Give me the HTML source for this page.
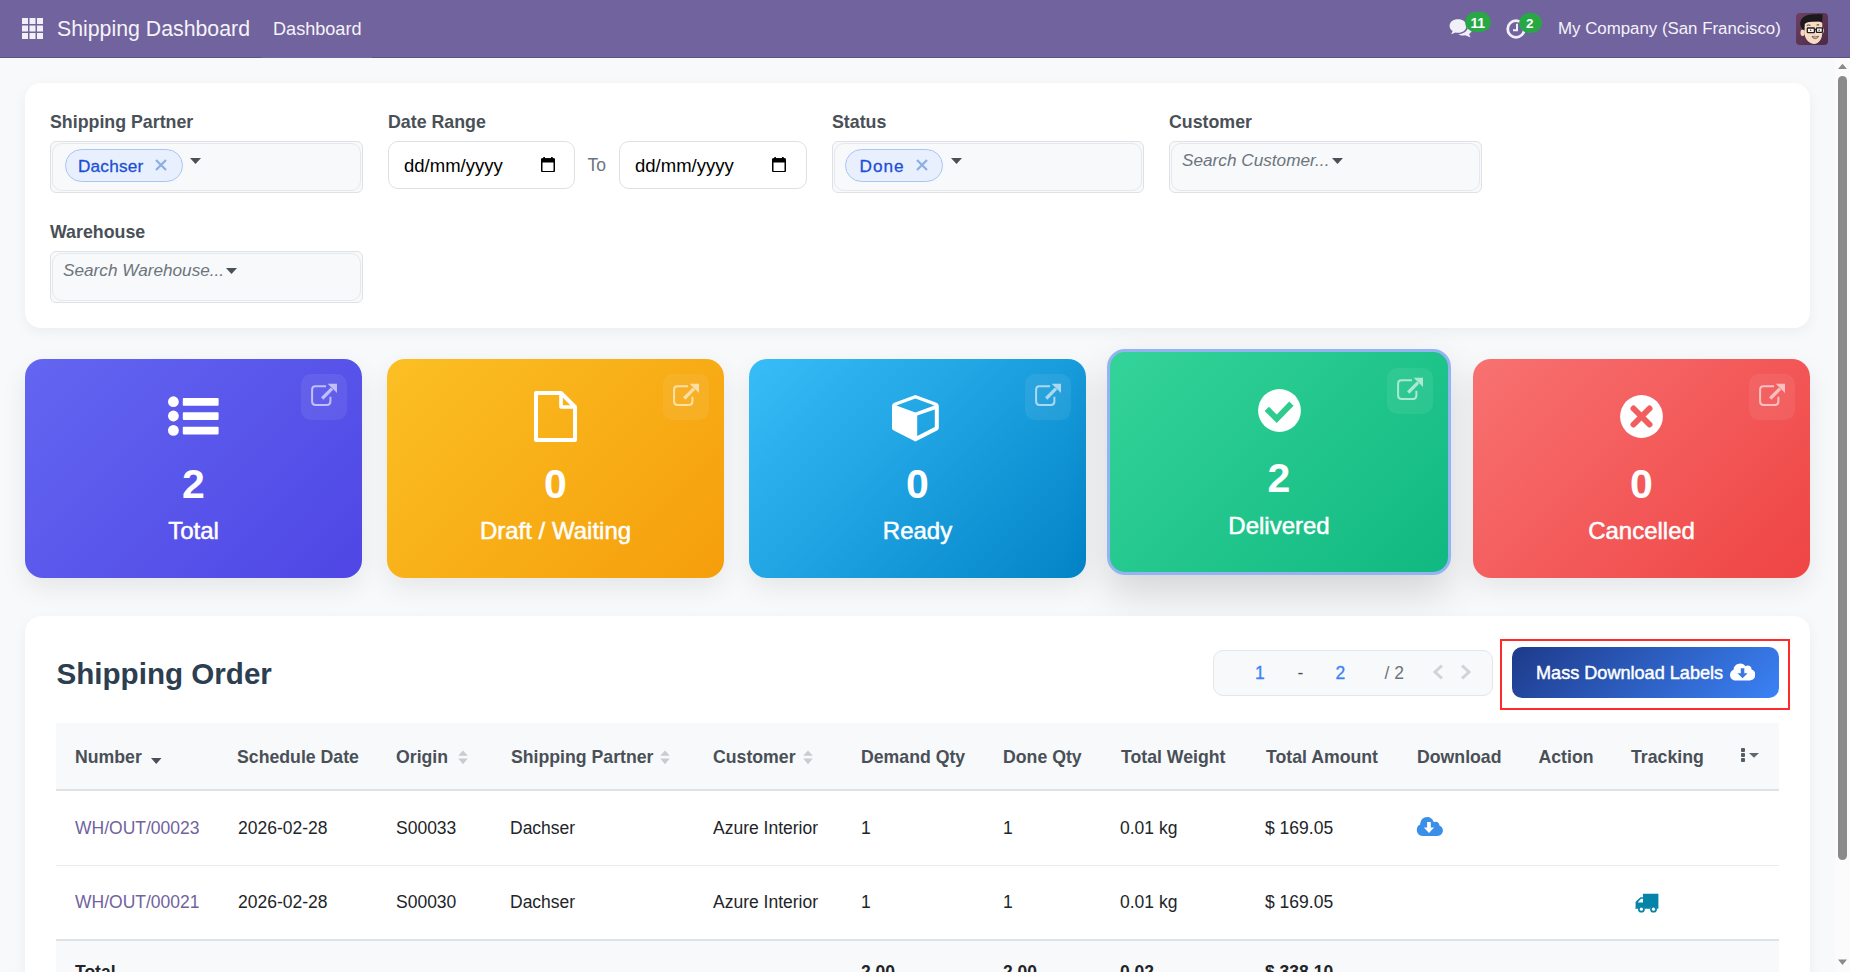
<!DOCTYPE html>
<html><head><meta charset="utf-8">
<style>
*{box-sizing:border-box;margin:0;padding:0}
html,body{width:1850px;height:972px;overflow:hidden}
body{background:#f8f9fa;font-family:"Liberation Sans",sans-serif;position:relative;color:#212529}
.a{position:absolute}
.t{position:absolute;line-height:1;white-space:nowrap}
/* navbar */
#nav{left:0;top:0;width:1850px;height:58px;background:#71639e;border-bottom:1px solid #5e5189}
#nav .t{color:#f5f3f9}
/* cards */
.card{position:absolute;background:#fff;border-radius:16px;box-shadow:0 4px 14px rgba(0,0,0,.05)}
.lbl{font-weight:700;font-size:17.8px;color:#495057}
.sel{position:absolute;background:#f8f9fa;border:1px solid #dee2e6;border-radius:6px}
.sel:after{content:"";position:absolute;left:1px;top:1px;right:1px;bottom:1px;border:1px solid #e6e8eb;border-radius:10px}
.chip{position:absolute;background:#e8f0fd;border:1px solid #a9c5f3;border-radius:17px}
.chip .t{color:#1d4ed8;font-size:17.2px;letter-spacing:0.2px;-webkit-text-stroke:0.3px #1d4ed8}
.ph{color:#6c757d;font-style:italic;font-size:17.2px}
.date{position:absolute;background:#fff;border:1px solid #dde1e6;border-radius:10px}
.stat{position:absolute;border-radius:18px;color:#fff;box-shadow:0 10px 26px rgba(0,0,0,.08)}
.stat .num{position:absolute;left:0;right:0;text-align:center;font-weight:700;font-size:41px;line-height:1}
.stat .cap{position:absolute;left:0;right:0;text-align:center;font-size:24px;line-height:1;-webkit-text-stroke:0.5px #fff}
.ext{position:absolute;width:46px;height:46px;border-radius:10px;background:rgba(255,255,255,.07)}
.th{font-weight:700;font-size:17.7px;color:#495057}
.td{font-size:17.5px;color:#212529}
</style></head><body>

<div id="nav" class="a">
  <svg class="a" style="left:22px;top:18px" width="21" height="21" viewBox="0 0 21 21" fill="#f1eff7">
    <rect x="0" y="0" width="6" height="6"/><rect x="7.5" y="0" width="6" height="6"/><rect x="15" y="0" width="6" height="6"/>
    <rect x="0" y="7.5" width="6" height="6"/><rect x="7.5" y="7.5" width="6" height="6"/><rect x="15" y="7.5" width="6" height="6"/>
    <rect x="0" y="15" width="6" height="6"/><rect x="7.5" y="15" width="6" height="6"/><rect x="15" y="15" width="6" height="6"/>
  </svg>
  <div class="t" style="left:57px;top:19px;font-size:21.3px">Shipping Dashboard</div>
  <div class="t" style="left:273px;top:19.8px;font-size:18.1px">Dashboard</div>
  <div class="t" style="left:1558px;top:21px;font-size:16.85px">My Company (San Francisco)</div>
</div>

<div class="a" style="left:262px;top:57px;width:110px;height:1px;background:#71639e"></div>
<!-- filter card -->
<div class="card" style="left:25px;top:83px;width:1785px;height:245px"></div>
<div class="t lbl" style="left:50px;top:114px">Shipping Partner</div>
<div class="t lbl" style="left:388px;top:114px">Date Range</div>
<div class="t lbl" style="left:832px;top:114px">Status</div>
<div class="t lbl" style="left:1169px;top:114px">Customer</div>
<div class="t lbl" style="left:50px;top:224px">Warehouse</div>

<div class="sel" style="left:50px;top:141px;width:313px;height:52px"></div>
<div class="chip" style="left:65px;top:149px;width:118px;height:33px"><div class="t" style="left:12px;top:8px">Dachser</div></div>

<div class="date" style="left:388px;top:141px;width:187px;height:48px"><div class="t" style="left:15px;top:14.5px;font-size:18.5px;color:#000">dd/mm/yyyy</div></div>
<div class="t" style="left:587.5px;top:156.5px;font-size:17.5px;color:#6c757d">To</div>
<div class="date" style="left:619px;top:141px;width:188px;height:48px"><div class="t" style="left:15px;top:14.5px;font-size:18.5px;color:#000">dd/mm/yyyy</div></div>

<div class="sel" style="left:832px;top:141px;width:312px;height:52px"></div>
<div class="chip" style="left:845px;top:149px;width:98px;height:33px"><div class="t" style="left:13.5px;top:8px;letter-spacing:1px">Done</div></div>

<div class="sel" style="left:1169px;top:141px;width:313px;height:52px"></div>
<div class="t ph" style="left:1182px;top:152px">Search Customer...</div>

<div class="sel" style="left:50px;top:251px;width:313px;height:52px"></div>
<div class="t ph" style="left:63px;top:262px">Search Warehouse...</div>

<!-- stat cards -->
<div class="stat" style="left:25px;top:359px;width:337px;height:219px;background:linear-gradient(135deg,#6366f1,#4f46e5)">
  <div class="ext" style="left:276px;top:15px"><svg width="46" height="46" viewBox="0 0 46 46" style="position:absolute;left:0;top:0"><path d="M25 12.3 H14.5 Q11.1 12.3 11.1 15.7 V27.6 Q11.1 31 14.5 31 H26 Q29.4 31 29.4 27.6 V22.8" fill="none" stroke="rgba(255,255,255,.6)" stroke-width="2"/><path d="M21.2 24.5 L31 14.7" stroke="rgba(255,255,255,.6)" stroke-width="3.2"/><path d="M26.7 9.8 H36 V19 Z" fill="rgba(255,255,255,.6)"/></svg></div>
  <div class="num" style="top:105px">2</div>
  <div class="cap" style="top:160px">Total</div>
</div>
<div class="stat" style="left:387px;top:359px;width:337px;height:219px;background:linear-gradient(135deg,#fbbf24,#f59e0b)">
  <div class="ext" style="left:276px;top:15px"><svg width="46" height="46" viewBox="0 0 46 46" style="position:absolute;left:0;top:0"><path d="M25 12.3 H14.5 Q11.1 12.3 11.1 15.7 V27.6 Q11.1 31 14.5 31 H26 Q29.4 31 29.4 27.6 V22.8" fill="none" stroke="rgba(255,255,255,.6)" stroke-width="2"/><path d="M21.2 24.5 L31 14.7" stroke="rgba(255,255,255,.6)" stroke-width="3.2"/><path d="M26.7 9.8 H36 V19 Z" fill="rgba(255,255,255,.6)"/></svg></div>
  <div class="num" style="top:105px">0</div>
  <div class="cap" style="top:160px">Draft / Waiting</div>
</div>
<div class="stat" style="left:749px;top:359px;width:337px;height:219px;background:linear-gradient(135deg,#38bdf8,#0284c7)">
  <div class="ext" style="left:276px;top:15px"><svg width="46" height="46" viewBox="0 0 46 46" style="position:absolute;left:0;top:0"><path d="M25 12.3 H14.5 Q11.1 12.3 11.1 15.7 V27.6 Q11.1 31 14.5 31 H26 Q29.4 31 29.4 27.6 V22.8" fill="none" stroke="rgba(255,255,255,.6)" stroke-width="2"/><path d="M21.2 24.5 L31 14.7" stroke="rgba(255,255,255,.6)" stroke-width="3.2"/><path d="M26.7 9.8 H36 V19 Z" fill="rgba(255,255,255,.6)"/></svg></div>
  <div class="num" style="top:105px">0</div>
  <div class="cap" style="top:160px">Ready</div>
</div>
<div class="stat" style="left:1107px;top:349px;width:344px;height:226px;background:linear-gradient(135deg,#34d399,#10b981);border:3.5px solid #93b4f0;box-shadow:0 18px 40px rgba(0,0,0,.15)">
  <div class="ext" style="left:277px;top:16px"><svg width="46" height="46" viewBox="0 0 46 46" style="position:absolute;left:0;top:0"><path d="M25 12.3 H14.5 Q11.1 12.3 11.1 15.7 V27.6 Q11.1 31 14.5 31 H26 Q29.4 31 29.4 27.6 V22.8" fill="none" stroke="rgba(255,255,255,.6)" stroke-width="2"/><path d="M21.2 24.5 L31 14.7" stroke="rgba(255,255,255,.6)" stroke-width="3.2"/><path d="M26.7 9.8 H36 V19 Z" fill="rgba(255,255,255,.6)"/></svg></div>
  <div class="num" style="top:106px">2</div>
  <div class="cap" style="top:161.5px">Delivered</div>
</div>
<div class="stat" style="left:1473px;top:359px;width:337px;height:219px;background:linear-gradient(135deg,#f87171,#ef4444)">
  <div class="ext" style="left:276px;top:15px"><svg width="46" height="46" viewBox="0 0 46 46" style="position:absolute;left:0;top:0"><path d="M25 12.3 H14.5 Q11.1 12.3 11.1 15.7 V27.6 Q11.1 31 14.5 31 H26 Q29.4 31 29.4 27.6 V22.8" fill="none" stroke="rgba(255,255,255,.6)" stroke-width="2"/><path d="M21.2 24.5 L31 14.7" stroke="rgba(255,255,255,.6)" stroke-width="3.2"/><path d="M26.7 9.8 H36 V19 Z" fill="rgba(255,255,255,.6)"/></svg></div>
  <div class="num" style="top:105px">0</div>
  <div class="cap" style="top:160px">Cancelled</div>
</div>


<!-- nav icons -->
<svg class="a" style="left:1446px;top:16px" width="30" height="24" viewBox="0 0 30 24">
  <path d="M12 3.2 C7.3 3.2 3.6 5.9 3.6 9.9 C3.6 12 4.8 13.8 6.6 15 L5.2 18.3 L9.6 16.4 C10.4 16.6 11.2 16.7 12 16.7 C16.7 16.7 20.4 13.9 20.4 9.9 C20.4 5.9 16.7 3.2 12 3.2 Z" fill="#f1eff7"/>
  <path d="M21.6 8.2 C21.9 9 22 9.6 22 10.3 C22 14.8 17.8 18.2 12.3 18.3 C13.6 19.1 15.3 19.5 17 19.5 C17.8 19.5 18.6 19.4 19.3 19.2 L24.5 21.6 L23.1 17.9 C24.9 16.8 26 15.1 26 13.2 C26 11 24.3 9.1 21.6 8.2 Z" fill="#f1eff7"/>
</svg>
<div class="a" style="left:1465px;top:12px;width:26px;height:20px;border-radius:10px;background:#28a745"></div>
<div class="t" style="left:1470.5px;top:15.5px;font-size:14px;font-weight:700;color:#fff;letter-spacing:-0.3px">11</div>
<svg class="a" style="left:1505px;top:18px" width="22" height="22" viewBox="0 0 22 22">
  <circle cx="11" cy="11" r="8.3" fill="none" stroke="#f1eff7" stroke-width="2.8"/>
  <path d="M12 5.8 V12.2 H8" fill="none" stroke="#f1eff7" stroke-width="2"/>
</svg>
<div class="a" style="left:1519px;top:12.5px;width:23px;height:20.5px;border-radius:11px;background:#28a745"></div>
<div class="t" style="left:1526px;top:16.5px;font-size:13.5px;font-weight:700;color:#fff">2</div>
<svg class="a" style="left:1796px;top:13px" width="32" height="32" viewBox="0 0 32 32">
  <defs><linearGradient id="avg" x1="0" y1="0" x2="1" y2="1"><stop offset="0" stop-color="#6d4062"/><stop offset="1" stop-color="#4b2a44"/></linearGradient></defs>
  <rect x="0" y="0" width="32" height="32" rx="4" fill="url(#avg)"/>
  <ellipse cx="6.6" cy="19.8" rx="2.1" ry="3.3" fill="#f6d6bb"/>
  <ellipse cx="26.6" cy="17.5" rx="1.3" ry="2.6" fill="#f6d6bb"/>
  <path d="M8.2 11 Q8 8.8 12 8.8 L24.5 8.2 Q26.4 8.5 26.3 12 L26.2 21 Q25.8 27 21.5 30 Q18.2 31.8 15 30.2 Q9.5 27.5 8.4 21 Z" fill="#f8dcc3"/>
  <path d="M4.2 10 C4.8 4.5 9.5 1.8 15 1.4 C19.5 1 23 1.6 24.3 0.6 C24.6 1.2 24.2 1.7 24.2 1.7 C25.6 1.2 26.7 1.2 26.8 1.5 C26.2 2.6 26.8 4 26.4 6 C26.3 7.8 26.3 8.8 26.2 9.8 C24.8 8.5 22 8.2 18 8.6 C13 9 10 9.4 8.8 11 C8.5 12.8 8.6 15 8.4 17.2 L6.6 16.4 C5.2 14.8 4 12.5 4.2 10 Z" fill="#1b191b"/>
  <path d="M10.8 12.4 Q12.5 11.6 14.4 12.3" stroke="#2a2220" stroke-width="0.9" fill="none"/>
  <path d="M20.6 12.1 Q22 11.5 23.2 12" stroke="#2a2220" stroke-width="0.9" fill="none"/>
  <rect x="11.3" y="15" width="7.1" height="4.6" rx="0.7" fill="#fbf6f2" stroke="#1e1e1e" stroke-width="1.3"/>
  <rect x="20.4" y="14.8" width="6" height="4.6" rx="0.7" fill="#fbf6f2" stroke="#1e1e1e" stroke-width="1.3"/>
  <path d="M18.4 16.6 H20.4" stroke="#1e1e1e" stroke-width="1.1"/>
  <circle cx="14.6" cy="17.3" r="0.8" fill="#333"/><circle cx="23.2" cy="17.2" r="0.7" fill="#333"/>
  <path d="M17.5 21.8 Q18.6 22.4 19.6 21.9" stroke="#e0a898" stroke-width="0.8" fill="none"/>
  <path d="M16 23.4 Q19.3 24.6 22.6 23.2 Q22 25.6 19.3 25.7 Q16.6 25.6 16 23.4 Z" fill="#d8c9c9" stroke="#3a3030" stroke-width="0.6"/>
</svg>

<!-- filter icons -->
<svg class="a" style="left:155px;top:159px" width="12" height="12" viewBox="0 0 12 12"><path d="M1 1 L11 11 M11 1 L1 11" stroke="#8eafe3" stroke-width="2.3"/></svg>
<svg class="a" style="left:190px;top:158px" width="11" height="6" viewBox="0 0 11 6"><path d="M0 0 H11 L5.5 6 Z" fill="#495057"/></svg>
<svg class="a" style="left:915.5px;top:159px" width="12" height="12" viewBox="0 0 12 12"><path d="M1 1 L11 11 M11 1 L1 11" stroke="#8eafe3" stroke-width="2.3"/></svg>
<svg class="a" style="left:951px;top:158px" width="11" height="6" viewBox="0 0 11 6"><path d="M0 0 H11 L5.5 6 Z" fill="#495057"/></svg>
<svg class="a" style="left:1332px;top:158px" width="11" height="6" viewBox="0 0 11 6"><path d="M0 0 H11 L5.5 6 Z" fill="#495057"/></svg>
<svg class="a" style="left:226px;top:268px" width="11" height="6" viewBox="0 0 11 6"><path d="M0 0 H11 L5.5 6 Z" fill="#495057"/></svg>
<svg class="a" style="left:541px;top:156.5px" width="14" height="15.5" viewBox="0 0 14 15.5">
  <rect x="0.75" y="2" width="12.5" height="12.7" rx="1.3" fill="none" stroke="#000" stroke-width="1.5"/>
  <rect x="0" y="1.3" width="14" height="4.2" rx="1.3" fill="#000"/>
  <rect x="2.3" y="0" width="1.6" height="2" fill="#000"/><rect x="10.1" y="0" width="1.6" height="2" fill="#000"/>
</svg>
<svg class="a" style="left:772px;top:156.5px" width="14" height="15.5" viewBox="0 0 14 15.5">
  <rect x="0.75" y="2" width="12.5" height="12.7" rx="1.3" fill="none" stroke="#000" stroke-width="1.5"/>
  <rect x="0" y="1.3" width="14" height="4.2" rx="1.3" fill="#000"/>
  <rect x="2.3" y="0" width="1.6" height="2" fill="#000"/><rect x="10.1" y="0" width="1.6" height="2" fill="#000"/>
</svg>

<!-- stat icons -->
<svg class="a" style="left:168px;top:396px" width="51" height="40" viewBox="0 0 51 40">
  <circle cx="5.4" cy="5.7" r="5.4" fill="#fff"/><circle cx="5.4" cy="20" r="5.4" fill="#fff"/><circle cx="5.4" cy="34.4" r="5.4" fill="#fff"/>
  <rect x="14.8" y="2" width="35.8" height="7.7" rx="0.8" fill="#fff"/><rect x="14.8" y="16.2" width="35.8" height="7.7" rx="0.8" fill="#fff"/><rect x="14.8" y="30.7" width="35.8" height="7.7" rx="0.8" fill="#fff"/>
</svg>
<svg class="a" style="left:534px;top:391px" width="43" height="51" viewBox="0 0 43 51">
  <path d="M2 2 H27 L41 16 V49 H2 Z" fill="none" stroke="#fff" stroke-width="4" stroke-linejoin="round"/>
  <path d="M27 2 V16 H41" fill="none" stroke="#fff" stroke-width="3.6" stroke-linejoin="round"/>
</svg>
<svg class="a" style="left:892px;top:395px" width="47" height="47" viewBox="0 0 47 47">
  <path fill="#fff" fill-rule="evenodd" d="M23.4 0 L44.5 7.8 Q46.8 8.8 46.8 11 V33 Q46.8 34.6 45 35.6 L23.4 46.4 L1.8 35.6 Q0 34.6 0 33 V11 Q0 8.8 2.3 7.8 Z M4.3 10.6 L23.4 17.6 L42.4 10.6 L23.4 3.6 Z M25.2 20.5 V41 L42.8 32 V14.4 Z"/>
</svg>
<svg class="a" style="left:1258px;top:388.5px" width="43" height="43" viewBox="0 0 43 43">
  <circle cx="21.5" cy="21.5" r="21.4" fill="#fff"/>
  <path d="M8.8 19.8 L18.7 29.8 L33.4 14.7" fill="none" stroke="#2fcb8e" stroke-width="6" stroke-linejoin="miter" stroke-linecap="butt"/>
</svg>
<svg class="a" style="left:1620px;top:394.5px" width="43" height="43" viewBox="0 0 43 43">
  <circle cx="21.5" cy="21.5" r="21.4" fill="#fff"/>
  <path d="M13.5 13.5 L29.5 29.5 M29.5 13.5 L13.5 29.5" fill="none" stroke="#f25e5e" stroke-width="6" stroke-linecap="round"/>
</svg>

<!-- table card -->
<div class="card" style="left:25px;top:616px;width:1785px;height:400px"></div>
<div class="t" style="left:56.5px;top:659px;font-size:29.6px;font-weight:700;color:#2c3e50">Shipping Order</div>


<div class="a" style="left:1213px;top:650px;width:280px;height:46px;background:#f8f9fa;border:1px solid #e3e6ea;border-radius:10px"></div>
<div class="t" style="left:1255px;top:664.5px;font-size:17.5px;color:#3b82f6;-webkit-text-stroke:0.3px #3b82f6">1</div>
<div class="t" style="left:1297.5px;top:664.5px;font-size:17.5px;color:#495057">-</div>
<div class="t" style="left:1335.5px;top:664.5px;font-size:17.5px;color:#3b82f6;-webkit-text-stroke:0.3px #3b82f6">2</div>
<div class="t" style="left:1384.5px;top:664.5px;font-size:17.5px;color:#6c757d">/ 2</div>
<svg class="a" style="left:1432px;top:664px" width="12" height="16" viewBox="0 0 12 16"><path d="M10 1.5 L3 8 L10 14.5" fill="none" stroke="#ced4da" stroke-width="3"/></svg>
<svg class="a" style="left:1460px;top:664px" width="12" height="16" viewBox="0 0 12 16"><path d="M2 1.5 L9 8 L2 14.5" fill="none" stroke="#ced4da" stroke-width="3"/></svg>

<div class="a" style="left:1500px;top:639px;width:290px;height:71px;border:2px solid #ff2a2a"></div>
<div class="a" style="left:1512px;top:647px;width:267px;height:51px;border-radius:10px;background:linear-gradient(135deg,#1e3a8a,#3b82f6)"></div>
<div class="t" style="left:1536px;top:664px;font-size:18.1px;color:#fff;-webkit-text-stroke:0.45px #fff">Mass Download Labels</div>

<div class="a" style="left:56px;top:723px;width:1723px;height:68px;background:#f8f9fa;border-bottom:2px solid #dee2e6"></div>
<div class="t th" style="left:75px;top:748.5px">Number</div>
<div class="t th" style="left:237px;top:748.5px">Schedule Date</div>
<div class="t th" style="left:396px;top:748.5px">Origin</div>
<div class="t th" style="left:511px;top:748.5px">Shipping Partner</div>
<div class="t th" style="left:713px;top:748.5px">Customer</div>
<div class="t th" style="left:861px;top:748.5px">Demand Qty</div>
<div class="t th" style="left:1003px;top:748.5px">Done Qty</div>
<div class="t th" style="left:1121px;top:748.5px">Total Weight</div>
<div class="t th" style="left:1266px;top:748.5px">Total Amount</div>
<div class="t th" style="left:1417px;top:748.5px">Download</div>
<div class="t th" style="left:1538.5px;top:748.5px">Action</div>
<div class="t th" style="left:1631px;top:748.5px">Tracking</div>

<div class="t td" style="left:75px;top:820px;color:#71639e">WH/OUT/00023</div>
<div class="t td" style="left:238px;top:820px">2026-02-28</div>
<div class="t td" style="left:396px;top:820px">S00033</div>
<div class="t td" style="left:510px;top:820px">Dachser</div>
<div class="t td" style="left:713px;top:820px">Azure Interior</div>
<div class="t td" style="left:861px;top:820px">1</div>
<div class="t td" style="left:1003px;top:820px">1</div>
<div class="t td" style="left:1120px;top:820px">0.01 kg</div>
<div class="t td" style="left:1265px;top:820px">$ 169.05</div>
<div class="a" style="left:56px;top:865px;width:1723px;height:1px;background:#e9ecef"></div>

<div class="t td" style="left:75px;top:894px;color:#71639e">WH/OUT/00021</div>
<div class="t td" style="left:238px;top:894px">2026-02-28</div>
<div class="t td" style="left:396px;top:894px">S00030</div>
<div class="t td" style="left:510px;top:894px">Dachser</div>
<div class="t td" style="left:713px;top:894px">Azure Interior</div>
<div class="t td" style="left:861px;top:894px">1</div>
<div class="t td" style="left:1003px;top:894px">1</div>
<div class="t td" style="left:1120px;top:894px">0.01 kg</div>
<div class="t td" style="left:1265px;top:894px">$ 169.05</div>

<div class="a" style="left:56px;top:939px;width:1723px;height:40px;background:#f8f9fa;border-top:2px solid #dee2e6"></div>
<div class="t td" style="left:75px;top:964px;font-weight:700">Total</div>
<div class="t td" style="left:861px;top:964px;font-weight:700">2.00</div>
<div class="t td" style="left:1003px;top:964px;font-weight:700">2.00</div>
<div class="t td" style="left:1120px;top:964px;font-weight:700">0.02</div>
<div class="t td" style="left:1265px;top:964px;font-weight:700">$ 338.10</div>


<!-- table icons -->
<svg class="a" style="left:1729.5px;top:662.5px" width="25.5" height="18.5" viewBox="0 0 26 18">
  <path d="M10.6 0 C6.8 0 3.8 2.8 3.6 6.5 C1.5 7.3 0 9.3 0 11.7 C0 14.8 2.5 17.3 5.6 17.3 H20.2 C23.4 17.3 26 14.7 26 11.5 C26 8.9 24.3 6.8 22 6.1 C22 3.9 20.3 2.2 18.1 2.2 C17.3 2.2 16.5 2.5 15.9 2.9 C14.7 1.1 12.8 0 10.6 0 Z" fill="#fff"/>
  <path d="M11 5 H14.6 V10 H18 L12.8 15.2 L7.6 10 H11 Z" fill="#3c77e0"/>
</svg>
<svg class="a" style="left:1412px;top:812px" width="36" height="30" viewBox="0 0 36 30">
  <path d="M15.4 5.1 C11 5.1 8.4 8.2 8.2 12.6 C5.9 13.4 4.8 15.6 4.8 18 C4.8 21.4 7.3 23.9 10.6 23.9 H25.4 C28.6 23.9 30.9 21.5 30.9 18.5 C30.9 16 29.3 14.2 27.4 13.6 C27.5 11.6 26 9.8 23.8 9.8 C23.1 9.8 22.4 10 21.9 10.3 C20.6 7.1 18.4 5.1 15.4 5.1 Z" fill="#3a8fe8"/>
  <path d="M15.1 10 H18.8 V15.4 H22.1 L17 21.1 L11.9 15.4 H15.1 Z" fill="#fff"/>
</svg>
<svg class="a" style="left:1630px;top:888px" width="35" height="30" viewBox="0 0 35 30">
  <path d="M13 5.7 H28.4 V20.7 H26.8 A3.5 3.5 0 0 0 20 20.7 H14.8 A3.5 3.5 0 0 0 8 20.7 H5.1 L5.6 19.8 V13.8 L10.5 9.3 H13 Z" fill="#0583a8"/>
  <path d="M7.7 14.5 L11 10.8 H13 V14.5 Z" fill="#fff"/>
  <circle cx="11.4" cy="21.2" r="3.4" fill="#0583a8"/><circle cx="11.4" cy="21.2" r="1.6" fill="#fff"/>
  <circle cx="23.5" cy="21.2" r="3.4" fill="#0583a8"/><circle cx="23.5" cy="21.2" r="1.6" fill="#fff"/>
</svg>
<svg class="a" style="left:150.5px;top:758px" width="11" height="6" viewBox="0 0 11 6"><path d="M0 0 H10.5 L5.25 6 Z" fill="#495057"/></svg>
<svg class="a" style="left:457.5px;top:749.5px" width="10" height="15" viewBox="0 0 10 15"><path d="M0.2 5.8 L5 0.4 L9.8 5.8 Z M0.2 8.5 H9.8 L5 14.3 Z" fill="#c8ccd0"/></svg>
<svg class="a" style="left:659.5px;top:749.5px" width="10" height="15" viewBox="0 0 10 15"><path d="M0.2 5.8 L5 0.4 L9.8 5.8 Z M0.2 8.5 H9.8 L5 14.3 Z" fill="#c8ccd0"/></svg>
<svg class="a" style="left:802.5px;top:749.5px" width="10" height="15" viewBox="0 0 10 15"><path d="M0.2 5.8 L5 0.4 L9.8 5.8 Z M0.2 8.5 H9.8 L5 14.3 Z" fill="#c8ccd0"/></svg>
<svg class="a" style="left:1740px;top:747px" width="20" height="16" viewBox="0 0 20 16">
  <rect x="1" y="1" width="4" height="4" rx="1" fill="#555c63"/><rect x="1" y="6" width="4" height="4" rx="1" fill="#555c63"/><rect x="1" y="11" width="4" height="4" rx="1" fill="#555c63"/>
  <path d="M9 6 H19 L14 10.8 Z" fill="#5f676f"/>
</svg>

<!-- scrollbar -->
<div class="a" style="left:1835px;top:58px;width:15px;height:914px;background:#fbfbfc"></div>
<svg class="a" style="left:1835px;top:58px" width="15" height="914" viewBox="0 0 15 914">
  <path d="M3 11 L7.5 5.8 L12 11 Z" fill="#8a8a8a"/>
  <rect x="3" y="18" width="9" height="784" rx="4.5" fill="#8a8a8a"/>
  <path d="M3 901.5 L7.5 907 L12 901.5 Z" fill="#8a8a8a"/>
</svg>

</body></html>
